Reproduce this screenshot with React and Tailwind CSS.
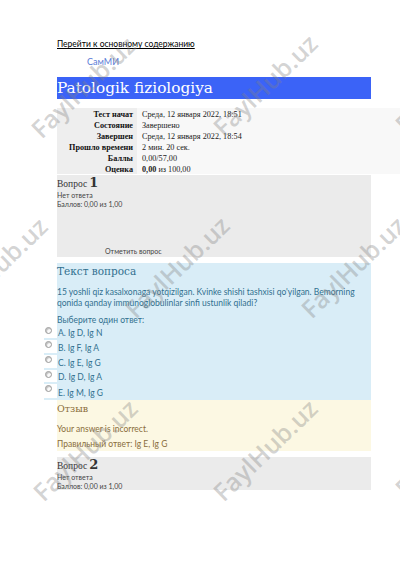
const rows = [
  ["Тест начат", "Среда, 12 января 2022, 18:51"],
  ["Состояние", "Завершено"],
  ["Завершен", "Среда, 12 января 2022, 18:54"],
  ["Прошло времени", "2 мин. 20 сек."],
  ["Баллы", "0,00/57,00"],
  ["Оценка", null],
];

const options = ["A. Ig D, Ig N", "B. Ig F, Ig A", "C. Ig E, Ig G", "D. Ig D, Ig A", "E. Ig M, Ig G"];

// watermark centres
const marks = [
  [83, 87], [265, 85], [447, 82],
  [-5, 268], [177, 267], [353, 267],
  [85, 450], [265, 450], [447, 446],
];

const lato = "font-['Lato','Open_Sans',sans-serif]";
const serif = "font-['DejaVu_Serif',serif]";
const times = "font-['Liberation_Serif','Times_New_Roman',serif]";

function Info({ n, tall }) {
  return (
    <div className={`bg-[#ebebeb] pt-[1px] ${tall ? "h-[82px]" : "h-[33px]"} flex flex-col`}>
      <div className="flex items-baseline leading-[13px]">
        <span className={`${times} text-[9.5px] text-[#333]`}>Вопрос</span>
        <span className={`${serif} text-[13px] font-bold text-[#333] ml-[2px]`}>{n}</span>
      </div>
      <div className={`${lato} text-[7px] leading-[9px] text-[#444]`}>Нет ответа</div>
      <div className={`${lato} text-[7px] leading-[9px] text-[#444]`}>Баллов: 0,00 из 1,00</div>
      {tall && (
        <div className={`${lato} text-[7px] leading-[9px] text-[#444] mt-auto mb-[1px] ml-[48px]`}>Отметить вопрос</div>
      )}
    </div>
  );
}

export default function App() {
  return (
    <div className="relative w-[400px] h-[566px] bg-white overflow-hidden">
      <div className="pt-[38px] pl-[57px]">
        <a className={`${lato} block text-[8.5px] leading-[12px] text-black underline w-fit`}>Перейти к основному содержанию</a>
        <div className={`${lato} text-[9px] leading-[12px] text-[#5b7bd6] ml-[30px] mt-[6px]`}>СамМИ</div>
        <div className="w-[314px] h-[22px] bg-[#3b63f7] mt-[9px] flex items-center">
          <h1 className={`${serif} text-[15.3px] leading-[22px] text-white`}>Patologik fiziologiya</h1>
        </div>

        <table className={`${times} mt-[9px] w-[343px] border-collapse`}>
          <tbody>
            {rows.map(([k, v]) => (
              <tr key={k} className="h-[11px]">
                <th className="bg-[#eeeeee] w-[80px] text-right font-bold text-[8.2px] pr-[4px] leading-[9.5px] pt-[1.5px] text-[#111] whitespace-nowrap">{k}</th>
                <td className="bg-[#f8f8f8] pl-[5px] text-[8.2px] leading-[9.5px] pt-[1.5px] text-[#222]">
                  {v ?? (
                    <>
                      <b>0,00</b> из 100,00
                    </>
                  )}
                </td>
              </tr>
            ))}
          </tbody>
        </table>

        <div className="w-[314px] mt-[1px]">
          <Info n="1" tall />

          <div className="bg-[#d9edf7] mt-[6px] pt-[1px] text-[#31708f]">
            <div className={`${serif} text-[10.5px] leading-[14px]`}>Текст вопроса</div>
            <p className={`${lato} text-[8.5px] leading-[10.5px] mt-[9px] pr-[12px]`}>
              15 yoshli qiz kasalxonaga yotqizilgan. Kvinke shishi tashxisi qo'yilgan. Bemorning qonida qanday immunoglobulinlar sinfi ustunlik qiladi?
            </p>
            <div className={`${lato} text-[8.5px] leading-[11px] mt-[6.5px]`}>Выберите один ответ:</div>
            <div>
              {options.map((o, i) => (
                <div key={o} className={`flex items-end -ml-[13px] ${i === 4 ? "h-[16px]" : "h-[14.7px]"}`}>
                  <div className="w-[13px] h-full bg-white flex flex-col">
                    <span className="w-[7px] h-[7px] rounded-full border border-[#9a9a9a] bg-[#fafafa] shadow-[inset_1px_1px_1px_rgba(0,0,0,0.25)] ml-[1px] mt-[1px]"></span>
                    <span className="mt-auto h-[2px] w-full bg-[#d9edf7]"></span>
                  </div>
                  <span className={`${lato} text-[8.5px] leading-[11px] text-[#31708f] ml-[1px] pb-[1px]`}>{o}</span>
                </div>
              ))}
            </div>
          </div>

          <div className="bg-[#fcf8e3] h-[51px] pt-[2px] text-[#8a6d3b]">
            <div className={`${serif} text-[9.5px] leading-[13px]`}>Отзыв</div>
            <div className={`${lato} text-[8.5px] leading-[11px] mt-[9px]`}>Your answer is incorrect.</div>
            <div className={`${lato} text-[8.5px] leading-[11px] mt-[4px]`}>Правильный ответ: Ig E, Ig G</div>
          </div>

          <div className="mt-[6px]">
            <Info n="2" />
          </div>
        </div>
      </div>

      {marks.map(([x, y], i) => (
        <span
          key={i}
          className="absolute pointer-events-none -translate-x-1/2 -translate-y-1/2 -rotate-[44deg] font-['Open_Sans',sans-serif] font-semibold text-[25px] leading-none text-[rgba(130,130,130,0.35)] whitespace-nowrap"
          style={{ left: x, top: y }}
        >
          FaylHub.uz
        </span>
      ))}
    </div>
  );
}
